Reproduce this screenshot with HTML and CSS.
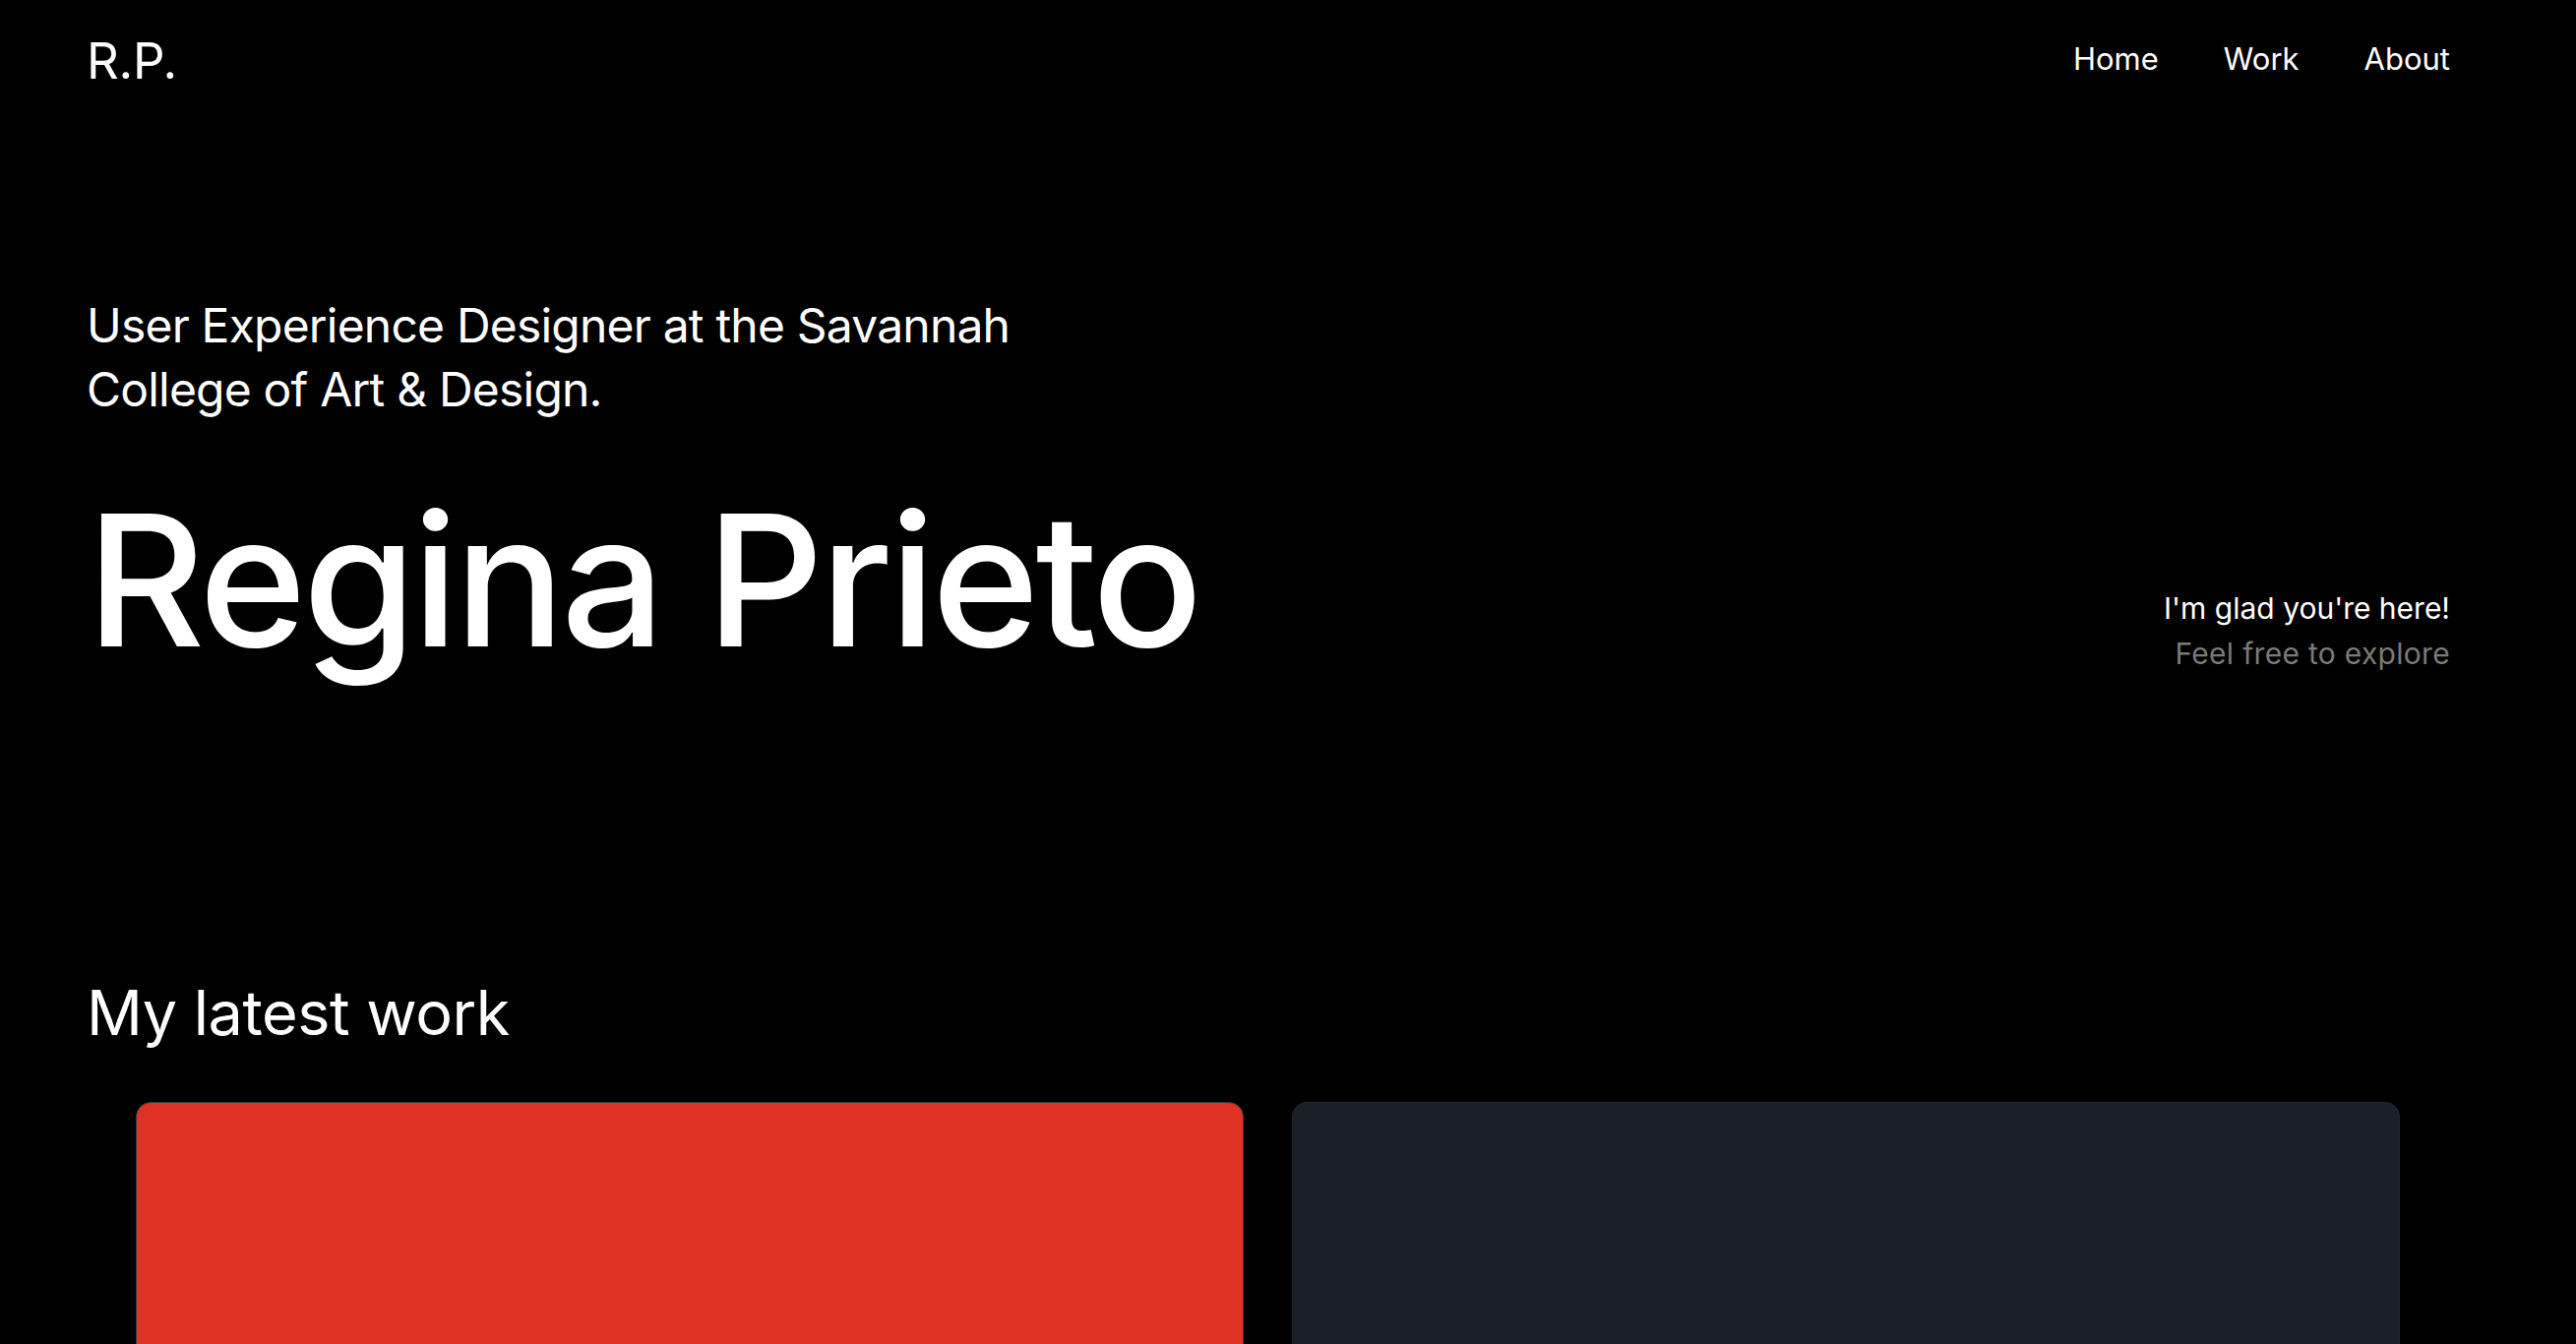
FILE: index.html
```html
<!DOCTYPE html>
<html lang="en">
<head>
<meta charset="utf-8">
<title>Regina Prieto</title>
<link rel="stylesheet" href="styles.css">
</head>
<body>
<div class="page">
  <header class="header">
    <div class="logo">R.P.</div>
    <nav class="nav">
      <a href="#" class="nav-link">Home</a>
      <a href="#" class="nav-link">Work</a>
      <a href="#" class="nav-link">About</a>
    </nav>
  </header>
  <section class="hero">
    <p class="subtitle">User Experience Designer at the Savannah<br>College of Art &amp; Design.</p>
    <div class="hero-row">
      <h1 class="name">Regina Prieto</h1>
      <div class="greeting">
        <div class="greet-main">I'm glad you're here!</div>
        <div class="greet-sub">Feel free to explore</div>
      </div>
    </div>
  </section>
  <section class="work">
    <h2 class="work-title">My latest work</h2>
    <div class="cards">
      <div class="card card-red"></div>
      <div class="card card-dark"></div>
    </div>
  </section>
</div>
</body>
</html>
```
FILE: styles.css
```css
html, body {
  margin: 0;
  padding: 0;
  background: #000;
}
body {
  color: #fff;
  font-family: Inter, "Liberation Sans", sans-serif;
  overflow: hidden;
}
.page {
  padding: 0 128px 0 88px;
}
.header {
  display: flex;
  justify-content: space-between;
  align-items: flex-start;
  padding-top: 36px;
}
.logo {
  font-size: 51px;
  line-height: 1;
  font-weight: 400;
  letter-spacing: -0.3px;
}
.nav {
  display: flex;
  gap: 66px;
  margin-top: 8px;
}
.nav-link {
  color: #fff;
  text-decoration: none;
  font-size: 31px;
  line-height: 1;
}
.subtitle {
  margin: 211px 0 0;
  font-size: 48px;
  line-height: 65px;
  font-weight: 400;
  letter-spacing: -0.8px;
}
.hero-row {
  display: flex;
  justify-content: space-between;
  align-items: flex-end;
  margin-top: 69px;
}
.name {
  margin: 0;
  font-size: 186px;
  line-height: 1;
  font-weight: 500;
  letter-spacing: -3.8px;
}
.greeting {
  text-align: right;
  font-size: 30px;
  line-height: 46px;
  margin-bottom: -4px;
}
.greet-sub {
  color: #7a7a7a;
  letter-spacing: 0.3px;
}
.work-title {
  margin: 315px 0 0;
  font-size: 63px;
  line-height: 1;
  font-weight: 400;
  letter-spacing: -0.5px;
}
.cards {
  display: flex;
  gap: 49px;
  padding: 0 51px 0 50px;
  margin-top: 59px;
}
.card {
  flex: 1;
  height: 720px;
  border-radius: 15px;
  box-sizing: border-box;
}
.card-red {
  background: #df3224;
  border: 1px solid #3b3b3b;
}
.card-dark {
  background: #1b1f27;
  border: 1px solid #22262e;
}
```
